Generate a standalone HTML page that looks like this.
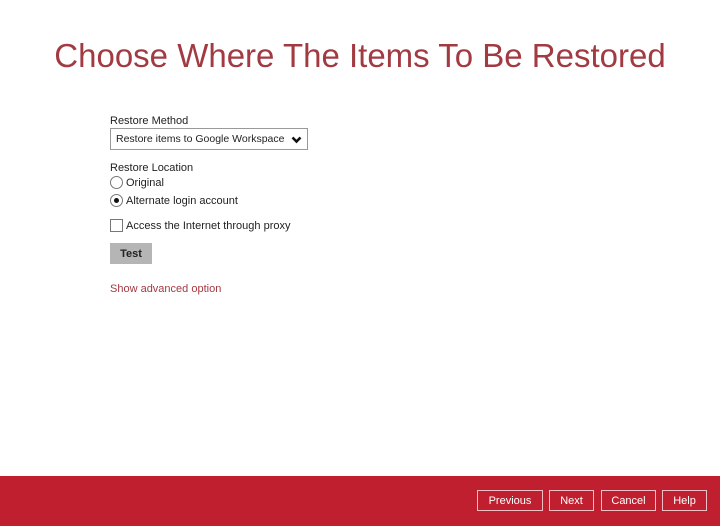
<!DOCTYPE html>
<html><head><style>
body{margin:0;width:720px;height:526px;background:#fff;font-family:"Liberation Sans",sans-serif;position:relative;overflow:hidden;color:#222}
.t{position:absolute;left:0;width:720px;top:37px;text-align:center;font-size:33px;color:#a23a42;font-weight:normal}
.a{position:absolute;font-size:11px}
.sel{position:absolute;left:110px;top:128px;width:198px;height:22px;border:1px solid #999;box-sizing:border-box;font-size:10.5px;line-height:20px;padding-left:5px}
.rad{position:absolute;width:11px;height:11px;border:1px solid #777;border-radius:50%;}
.chk{position:absolute;left:110px;top:219px;width:11px;height:11px;border:1px solid #777}
.test{position:absolute;left:110px;top:243px;width:42px;height:21px;background:#b5b5b5;font-size:11px;font-weight:bold;text-align:center;line-height:22px}
.foot{position:absolute;left:0;top:476px;width:720px;height:50px;background:#bf1f2e}
.b{position:absolute;top:490px;height:19px;border:1px solid #f2c0c4;color:#fff;font-size:11px;line-height:21px;text-align:center;box-sizing:content-box}
</style></head><body>
<div class="t">Choose Where The Items To Be Restored</div>
<div class="a" style="left:110px;top:115px">Restore Method</div>
<div class="sel">Restore items to Google Workspace
<svg style="position:absolute;right:5px;top:7px" width="11" height="8" viewBox="0 0 11 8"><path d="M1.5 1.5 L5.5 5.5 L9.5 1.5" stroke="#111" stroke-width="2.6" fill="none"/></svg></div>
<div class="a" style="left:110px;top:162px">Restore Location</div>
<div class="rad" style="left:110px;top:176px"></div>
<div class="a" style="left:126px;top:177px">Original</div>
<div class="rad" style="left:110px;top:194px"><div style="position:absolute;left:3px;top:3px;width:5px;height:5px;border-radius:50%;background:#111"></div></div>
<div class="a" style="left:126px;top:195px">Alternate login account</div>
<div class="chk"></div>
<div class="a" style="left:126px;top:220px">Access the Internet through proxy</div>
<div class="test">Test</div>
<div class="a" style="left:110px;top:283px;color:#a23a42">Show advanced option</div>
<div class="foot"></div>
<div class="b" style="left:477px;width:64px">Previous</div>
<div class="b" style="left:549px;width:43px">Next</div>
<div class="b" style="left:601px;width:53px">Cancel</div>
<div class="b" style="left:662px;width:43px">Help</div>
</body></html>
